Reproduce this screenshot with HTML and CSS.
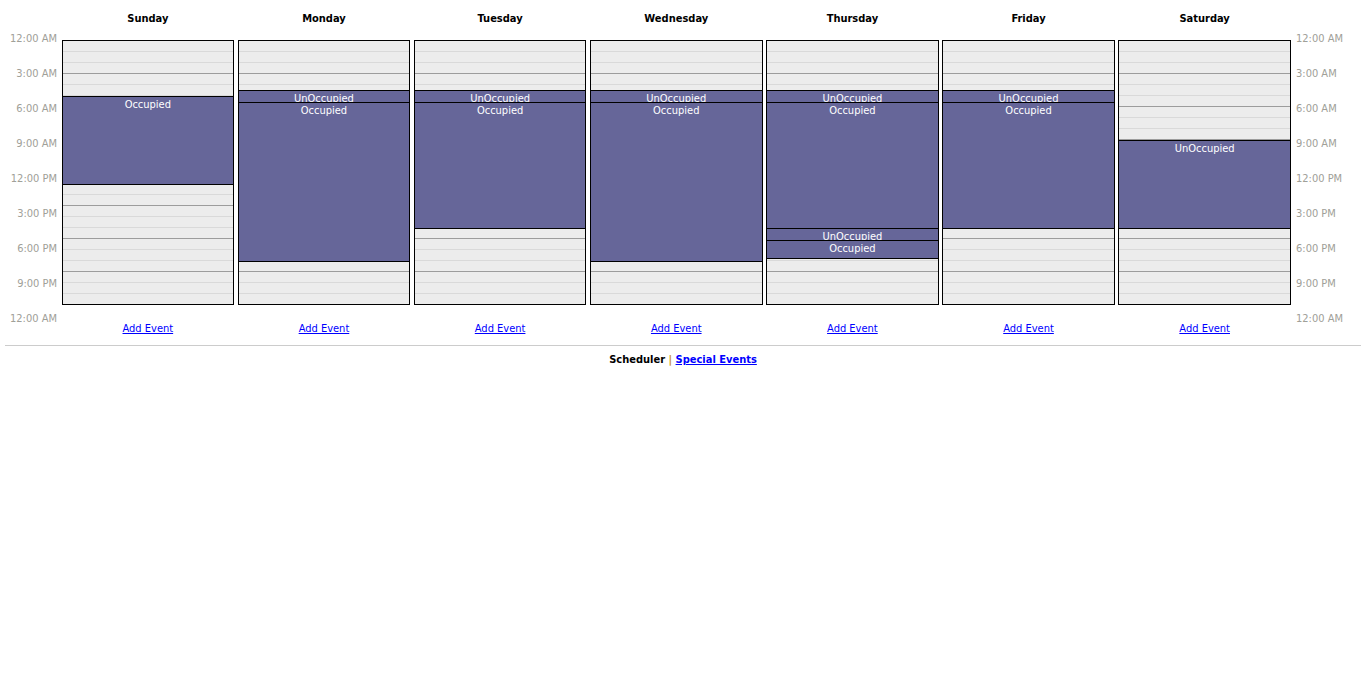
FILE: index.html
```html
<!DOCTYPE html>
<html lang="en">
<head>
<meta charset="utf-8">
<title>Scheduler</title>
<link rel="stylesheet" href="styles.css">
</head>
<body>
<div class="page">
  <div class="week">
    <div class="times times-left">
      <div class="time">12:00 AM</div>
      <div class="time">3:00 AM</div>
      <div class="time">6:00 AM</div>
      <div class="time">9:00 AM</div>
      <div class="time">12:00 PM</div>
      <div class="time">3:00 PM</div>
      <div class="time">6:00 PM</div>
      <div class="time">9:00 PM</div>
      <div class="time">12:00 AM</div>
    </div>

    <div class="days">
      <div class="day">
        <div class="day-name">Sunday</div>
        <div class="day-grid">
          <div class="event" style="top:55px;height:89px">Occupied</div>
        </div>
        <div class="day-add"><a href="#">Add Event</a></div>
      </div>

      <div class="day">
        <div class="day-name">Monday</div>
        <div class="day-grid">
          <div class="event" style="top:49px;height:13px">UnOccupied</div>
          <div class="event" style="top:61px;height:160px">Occupied</div>
        </div>
        <div class="day-add"><a href="#">Add Event</a></div>
      </div>

      <div class="day">
        <div class="day-name">Tuesday</div>
        <div class="day-grid">
          <div class="event" style="top:49px;height:13px">UnOccupied</div>
          <div class="event" style="top:61px;height:127px">Occupied</div>
        </div>
        <div class="day-add"><a href="#">Add Event</a></div>
      </div>

      <div class="day">
        <div class="day-name">Wednesday</div>
        <div class="day-grid">
          <div class="event" style="top:49px;height:13px">UnOccupied</div>
          <div class="event" style="top:61px;height:160px">Occupied</div>
        </div>
        <div class="day-add"><a href="#">Add Event</a></div>
      </div>

      <div class="day">
        <div class="day-name">Thursday</div>
        <div class="day-grid">
          <div class="event" style="top:49px;height:13px">UnOccupied</div>
          <div class="event" style="top:61px;height:127px">Occupied</div>
          <div class="event" style="top:187px;height:13px">UnOccupied</div>
          <div class="event" style="top:199px;height:19px">Occupied</div>
        </div>
        <div class="day-add"><a href="#">Add Event</a></div>
      </div>

      <div class="day">
        <div class="day-name">Friday</div>
        <div class="day-grid">
          <div class="event" style="top:49px;height:13px">UnOccupied</div>
          <div class="event" style="top:61px;height:127px">Occupied</div>
        </div>
        <div class="day-add"><a href="#">Add Event</a></div>
      </div>

      <div class="day">
        <div class="day-name">Saturday</div>
        <div class="day-grid">
          <div class="event" style="top:99px;height:89px">UnOccupied</div>
        </div>
        <div class="day-add"><a href="#">Add Event</a></div>
      </div>
    </div>

    <div class="times times-right">
      <div class="time">12:00 AM</div>
      <div class="time">3:00 AM</div>
      <div class="time">6:00 AM</div>
      <div class="time">9:00 AM</div>
      <div class="time">12:00 PM</div>
      <div class="time">3:00 PM</div>
      <div class="time">6:00 PM</div>
      <div class="time">9:00 PM</div>
      <div class="time">12:00 AM</div>
    </div>
  </div>

  <hr class="rule">

  <div class="footer">
    <span class="footer-current">Scheduler</span>
    <span class="footer-sep">|</span>
    <a class="footer-link" href="#">Special Events</a>
  </div>
</div>
</body>
</html>
```

FILE: styles.css
```css
html, body {
  margin: 0;
  padding: 0;
  background: #ffffff;
}

body {
  font-family: "DejaVu Sans Condensed", "Liberation Sans", sans-serif;
  font-size: 11px;
  color: #000000;
}

.page {
  padding: 6px 5px 0;
}

/* week layout: time scale | seven day columns | time scale */
.week {
  display: flex;
  align-items: flex-start;
}

.times {
  display: flex;
  flex-direction: column;
  padding-top: 15px;
  color: #a0a098;
}

.time {
  height: 35px;
  line-height: 35px;
  white-space: nowrap;
}

.times-left {
  width: 52px;
  text-align: right;
}

.times-right {
  flex: 1;
  padding-left: 2px;
  text-align: left;
}

.days {
  width: 1237px;
  display: grid;
  grid-template-columns: repeat(7, 1fr);
  column-gap: 3.5px;
  padding: 0 3px 0 4.5px;
  box-sizing: border-box;
}

.day {
  display: flex;
  flex-direction: column;
  min-width: 0;
}

.day-name {
  height: 34px;
  padding-top: 6px;
  box-sizing: border-box;
  line-height: 14px;
  font-weight: bold;
  text-align: center;
}

/* hour slots: light line every hour, darker line every three hours */
.day-grid {
  position: relative;
  height: 265px;
  box-sizing: border-box;
  border: 1px solid #000000;
  overflow: hidden;
  background:
    repeating-linear-gradient(to bottom, transparent 0 32px, #9c9c9c 32px 33px),
    repeating-linear-gradient(to bottom, transparent 0 10px, #d9d9d9 10px 11px),
    #ececec;
}

.event {
  position: absolute;
  left: 0;
  right: 0;
  box-sizing: border-box;
  padding-top: 1px;
  border-top: 1px solid #000000;
  border-bottom: 1px solid #000000;
  background: #666699;
  color: #ffffff;
  text-align: center;
  line-height: 14px;
  overflow: hidden;
  white-space: nowrap;
}

.day-add {
  margin-top: 17px;
  line-height: 14px;
  text-align: center;
}

.day-add a {
  color: #0000ff;
  text-decoration: underline;
}

.rule {
  margin: 9px 0 0;
  border: 0;
  height: 1px;
  background: #cccccc;
}

.footer {
  margin-top: 7px;
  line-height: 14px;
  text-align: center;
  font-weight: bold;
}

.footer-sep {
  color: #c8902c;
}

.footer-link {
  color: #0000ff;
  text-decoration: underline;
}
```
